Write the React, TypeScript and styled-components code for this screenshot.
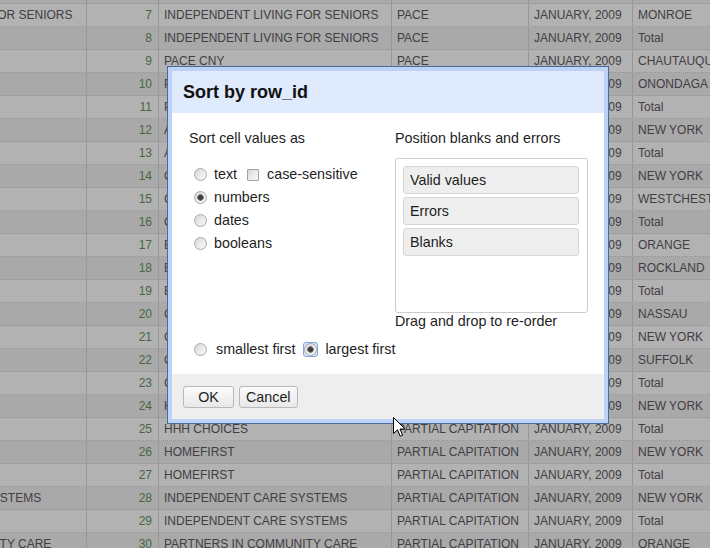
import React from "react";
import styled, { createGlobalStyle } from "styled-components";

const GlobalStyle = createGlobalStyle`
  html, body { margin: 0; padding: 0; width: 710px; height: 548px; overflow: hidden; background: #fff; }
  body { font-family: "Liberation Sans", Arial, sans-serif; }
  * { box-sizing: border-box; }
`;

const Page = styled.div`
  position: relative;
  width: 710px;
  height: 548px;
  overflow: hidden;
`;

const DataGrid = styled.div`
  margin-top: -19px;
  margin-left: -148px;
  width: 1000px;
`;

const DataRow = styled.div<{ $even: boolean }>`
  display: grid;
  grid-template-columns: 234px 72px 233px 137px 104px 220px;
  height: 23px;
  border-bottom: 1px dotted #d2d2d2;
  background: ${(p) => (p.$even ? "#f2f2f2" : "#ffffff")};
  font-size: 12px;
  color: #5e5a62;
`;

const Cell = styled.div<{ $kind?: "first" | "num" | "text" }>`
  border-left: ${(p) => (p.$kind === "first" ? "none" : "1px solid #d9d9d9")};
  padding: ${(p) =>
    p.$kind === "num" ? "0 6px 0 0" : p.$kind === "first" ? "0 0 0 6px" : "0 0 0 5px"};
  text-align: ${(p) => (p.$kind === "num" ? "right" : "left")};
  color: ${(p) => (p.$kind === "num" ? "#66955c" : "inherit")};
  line-height: 22px;
  white-space: nowrap;
  overflow: hidden;
`;

const Overlay = styled.div`
  position: absolute;
  inset: 0;
  background: rgba(0, 0, 0, 0.3);
`;

const Dialog = styled.div`
  position: absolute;
  left: 167px;
  top: 66px;
  width: 442px;
  border: 1px solid #4a6a9c;
  padding: 4px;
  background: #bcd3f6;
  color: #1e1e1e;
  font-size: 14.3px;
`;

const Header = styled.div`
  height: 42px;
  display: flex;
  align-items: center;
  padding: 0 11px;
  background: #dfeafc;
  font-size: 18px;
  font-weight: bold;
  color: #111;
`;

const Body = styled.div`
  background: #fff;
  padding: 17px 15px 13px 17px;
  display: grid;
  grid-template-columns: 206px 193px;
  line-height: 17px;
`;

const HeadLabel = styled.div`
  white-space: nowrap;
  height: 17px;
  margin-bottom: 11px;
`;

const Label = styled.div`
  white-space: nowrap;
  height: 17px;
`;

const BottomRow = styled.div`
  grid-column: 1 / span 2;
  margin-top: 8px;
  display: flex;
  align-items: center;
  height: 23px;
`;

const OptionList = styled.div`
  padding-top: 5px;
  display: flex;
  flex-direction: column;
`;

const Option = styled.label<{ $gap?: number }>`
  display: flex;
  align-items: center;
  height: 23px;
  white-space: nowrap;
  gap: ${(p) => p.$gap ?? 7}px;
`;

const Radio = styled.input.attrs({ type: "radio" })`
  appearance: none;
  -webkit-appearance: none;
  width: 13px;
  height: 13px;
  margin: 0 0 0 5px;
  border-radius: 50%;
  border: 1px solid #a9a9a9;
  background: linear-gradient(135deg, #d4d4d4 0%, #ececec 55%, #f6f6f6 100%);
  flex: none;
  &:checked {
    background: radial-gradient(circle at 50% 50%, #333 0, #444 2px, #777 3px, transparent 3.6px),
      linear-gradient(135deg, #d4d4d4 0%, #ececec 55%, #f6f6f6 100%);
  }
`;

const FocusRing = styled.span`
  display: inline-flex;
  width: 15px;
  height: 15px;
  align-items: center;
  justify-content: center;
  border: 1px solid #7ea6e4;
  border-radius: 3px;
  background: #d9e7fb;
  margin-left: 8px;
  flex: none;
  & > input {
    margin: 0;
  }
`;

const Check = styled.input.attrs({ type: "checkbox" })`
  appearance: none;
  -webkit-appearance: none;
  width: 12px;
  height: 12px;
  margin: 0 1px 0 3px;
  border: 1px solid #a2a2a2;
  border-radius: 1px;
  background: linear-gradient(135deg, #d8d8d8 0%, #eeeeee 60%, #f8f8f8 100%);
  flex: none;
`;

const OrderBox = styled.div`
  height: 155px;
  border: 1px solid #cccccc;
  border-radius: 3px;
  padding: 7px 8px 7px 7px;
  display: flex;
  flex-direction: column;
  gap: 3px;
`;

const OrderItem = styled.div`
  height: 28px;
  border: 1px solid #d6d6d6;
  border-radius: 3px;
  background: #eeeeee;
  padding-left: 6px;
  display: flex;
  align-items: center;
`;

const Footer = styled.div`
  height: 45px;
  background: #eeeeee;
  padding: 12px 11px;
  display: flex;
  gap: 5px;
  align-items: flex-start;
`;

const Button = styled.button`
  height: 22px;
  min-width: 51px;
  padding: 0 6px;
  font-family: "Liberation Sans", Arial, sans-serif;
  font-size: 14.3px;
  color: #1e1e1e;
  border: 1px solid #b8b8b8;
  border-radius: 3px;
  background: linear-gradient(#fbfbfb, #e8e8e8);
  line-height: 20px;
`;

const Cursor = styled.svg`
  position: absolute;
  left: 393px;
  top: 417px;
`;

type RowData = [number, string, string, string, string, string];

const rows: RowData[] = [
  [6, "INDEPENDENT LIVING FOR SENIORS", "INDEPENDENT LIVING FOR SENIORS", "PACE", "JANUARY, 2009", "Total"],
  [7, "INDEPENDENT LIVING FOR SENIORS", "INDEPENDENT LIVING FOR SENIORS", "PACE", "JANUARY, 2009", "MONROE"],
  [8, "", "INDEPENDENT LIVING FOR SENIORS", "PACE", "JANUARY, 2009", "Total"],
  [9, "", "PACE CNY", "PACE", "JANUARY, 2009", "CHAUTAUQUA"],
  [10, "", "PACE CNY", "PACE", "JANUARY, 2009", "ONONDAGA"],
  [11, "", "PACE CNY", "PACE", "JANUARY, 2009", "Total"],
  [12, "", "ARCHCARE SENIOR LIFE", "PACE", "JANUARY, 2009", "NEW YORK"],
  [13, "", "ARCHCARE SENIOR LIFE", "PACE", "JANUARY, 2009", "Total"],
  [14, "", "COMPLETE SENIOR CARE", "PACE", "JANUARY, 2009", "NEW YORK"],
  [15, "", "COMPLETE SENIOR CARE", "PACE", "JANUARY, 2009", "WESTCHESTER"],
  [16, "", "COMPLETE SENIOR CARE", "PACE", "JANUARY, 2009", "Total"],
  [17, "", "ELDERPLAN", "PARTIAL CAPITATION", "JANUARY, 2009", "ORANGE"],
  [18, "", "ELDERPLAN", "PARTIAL CAPITATION", "JANUARY, 2009", "ROCKLAND"],
  [19, "", "ELDERPLAN", "PARTIAL CAPITATION", "JANUARY, 2009", "Total"],
  [20, "", "CENTERS PLAN FOR HEALTHY LIVING", "PARTIAL CAPITATION", "JANUARY, 2009", "NASSAU"],
  [21, "", "CENTERS PLAN FOR HEALTHY LIVING", "PARTIAL CAPITATION", "JANUARY, 2009", "NEW YORK"],
  [22, "", "CENTERS PLAN FOR HEALTHY LIVING", "PARTIAL CAPITATION", "JANUARY, 2009", "SUFFOLK"],
  [23, "", "CENTERS PLAN FOR HEALTHY LIVING", "PARTIAL CAPITATION", "JANUARY, 2009", "Total"],
  [24, "", "HHH CHOICES", "PARTIAL CAPITATION", "JANUARY, 2009", "NEW YORK"],
  [25, "", "HHH CHOICES", "PARTIAL CAPITATION", "JANUARY, 2009", "Total"],
  [26, "", "HOMEFIRST", "PARTIAL CAPITATION", "JANUARY, 2009", "NEW YORK"],
  [27, "", "HOMEFIRST", "PARTIAL CAPITATION", "JANUARY, 2009", "Total"],
  [28, "INDEPENDENT CARE SYSTEMS", "INDEPENDENT CARE SYSTEMS", "PARTIAL CAPITATION", "JANUARY, 2009", "NEW YORK"],
  [29, "", "INDEPENDENT CARE SYSTEMS", "PARTIAL CAPITATION", "JANUARY, 2009", "Total"],
  [30, "PARTNERS IN COMMUNITY CARE", "PARTNERS IN COMMUNITY CARE", "PARTIAL CAPITATION", "JANUARY, 2009", "ORANGE"],
];

export default function App() {
  return (
    <Page>
      <GlobalStyle />
      <DataGrid>
        {rows.map(([n, a, b, c, d, e]) => (
          <DataRow key={n} $even={n % 2 === 0}>
            <Cell $kind="first">{a}</Cell>
            <Cell $kind="num">{n}</Cell>
            <Cell>{b}</Cell>
            <Cell>{c}</Cell>
            <Cell>{d}</Cell>
            <Cell>{e}</Cell>
          </DataRow>
        ))}
      </DataGrid>
      <Overlay />
      <Dialog>
        <Header>Sort by row_id</Header>
        <Body>
          <HeadLabel>Sort cell values as</HeadLabel>
          <HeadLabel>Position blanks and errors</HeadLabel>
          <OptionList>
            <Option>
              <Radio name="valueType" />
              <span>text</span>
              <Check />
              <span>case-sensitive</span>
            </Option>
            <Option>
              <Radio name="valueType" defaultChecked />
              <span>numbers</span>
            </Option>
            <Option>
              <Radio name="valueType" />
              <span>dates</span>
            </Option>
            <Option>
              <Radio name="valueType" />
              <span>booleans</span>
            </Option>
          </OptionList>
          <div>
            <OrderBox>
              <OrderItem>Valid values</OrderItem>
              <OrderItem>Errors</OrderItem>
              <OrderItem>Blanks</OrderItem>
            </OrderBox>
            <Label>Drag and drop to re-order</Label>
          </div>
          <BottomRow>
            <Option $gap={9}>
              <Radio name="direction" />
              <span>smallest first</span>
            </Option>
            <Option $gap={7}>
              <FocusRing>
                <Radio name="direction" defaultChecked />
              </FocusRing>
              <span>largest first</span>
            </Option>
          </BottomRow>
        </Body>
        <Footer>
          <Button>OK</Button>
          <Button>Cancel</Button>
        </Footer>
      </Dialog>
      <Cursor width="13" height="21" viewBox="0 0 13 21">
        <path d="M0.5 0.5 L0.5 16.5 L4.5 12.8 L7.2 19.2 L9.6 18.2 L7 12 L12 12 Z" fill="#fff" stroke="#000" strokeWidth="1" strokeLinejoin="miter" />
      </Cursor>
    </Page>
  );
}
